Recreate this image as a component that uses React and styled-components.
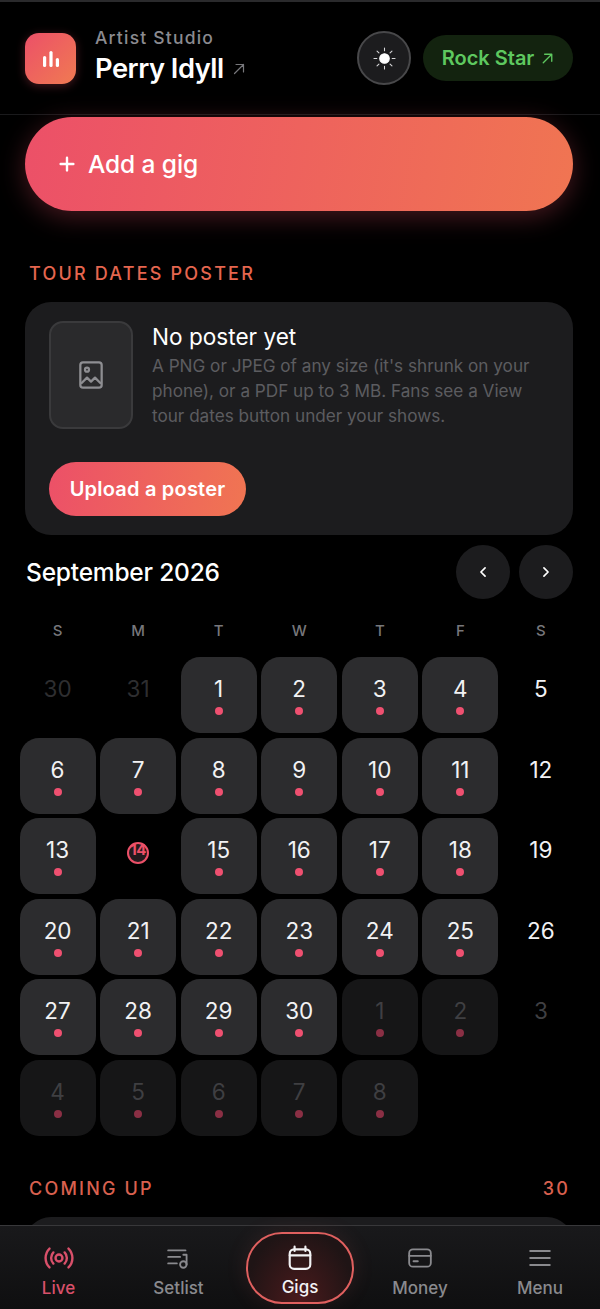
import React from 'react';
import styled, { createGlobalStyle } from 'styled-components';

const Global = createGlobalStyle`
  html, body { margin: 0; padding: 0; background: #000; }
  body { font-family: Inter, "Noto Sans", sans-serif; -webkit-font-smoothing: antialiased; }
  * { box-sizing: border-box; }
`;

const Page = styled.div`
  width: 600px; height: 1309px; overflow: hidden; background: #000; position: relative;
  border-top: 2px solid #2a2a2c;
`;
const Header = styled.header`
  height: 113px; border-bottom: 1px solid #1a1a1c;
  display: flex; align-items: center; padding: 0 27px 0 25px; margin-bottom: 2px;
`;
const Logo = styled.div`
  width: 51px; height: 51px; border-radius: 14px; margin-top: 1px;
  background: linear-gradient(135deg, #ec5068, #f07a52);
  box-shadow: 0 2px 10px rgba(236,80,104,.3);
  display: flex; align-items: center; justify-content: center;
`;
const Titles = styled.div`
  margin-left: 19px; flex: 1; display: flex; flex-direction: column; gap: 3px; margin-top: -3px;
`;
const Eyebrow = styled.div`
  font-size: 17.5px; line-height: 24px; color: #8b8b90; font-weight: 500; letter-spacing: 1.2px; margin-top: -2px;
`;
const NameRow = styled.div`
  display: flex; align-items: center; gap: 6px;
`;
const Name = styled.div`
  font-size: 27.3px; line-height: 32px; color: #fff; font-weight: 600; letter-spacing: -.5px;
`;
const ThemeButton = styled.button`
  width: 54px; height: 54px; border-radius: 50%; background: #1c1c1e; border: 2px solid #48484a;
  display: flex; align-items: center; justify-content: center; padding: 0; margin-right: 12px;
`;
const Plan = styled.div`
  height: 46px; width: 150px; border-radius: 23px; background: #13230f; color: #5ec85f;
  font-size: 20px; font-weight: 600; display: flex; align-items: center; justify-content: center; gap: 5px; padding-left: 2px;
`;
const AddGig = styled.button`
  display: flex; align-items: center; width: 548px; height: 94px; margin: 0 0 0 25px; border: 0;
  border-radius: 47px; background: linear-gradient(100deg, #ec5068, #f07552); color: #fff;
  padding: 0 0 0 33px; gap: 12px; font: 500 24.5px Inter, sans-serif; letter-spacing: -.1px;
  box-shadow: 0 6px 26px rgba(236,80,104,.3);
`;
const SectionLabel = styled.div`
  display: flex; justify-content: space-between; color: ${p => p.$dim ? '#d9604f' : '#e5664f'};
  font-size: 18px; font-weight: 500; letter-spacing: 2.2px; line-height: 24px;
  padding: 0 30px 0 29px;
`;
const PosterLabel = styled(SectionLabel)`margin-top: 51px;`;
const Card = styled.section`
  margin: 16px 27px 0 25px; height: 233px; border-radius: 26px; background: #1c1c1e;
  padding: 19px 24px;
`;
const PosterRow = styled.div`display: flex; gap: 19px;`;
const Thumb = styled.div`
  width: 84px; height: 108px; flex: none; border-radius: 14px; background: #2a2a2c; border: 2px solid #3a3a3c;
  display: flex; align-items: center; justify-content: center;
`;
const PosterText = styled.div`padding-top: 2px;`;
const PosterTitle = styled.div`font-size: 22.6px; line-height: 28px; color: #fff; font-weight: 400;`;
const PosterDesc = styled.div`
  font-size: 17.15px; line-height: 25px; color: #5c5c60; margin-top: 2px; white-space: nowrap;
`;
const Upload = styled.button`
  display: block; margin-top: 33px; width: 197px; height: 54px; border: 0; border-radius: 27px;
  background: linear-gradient(100deg, #ec5068, #f07552); color: #fff; font: 600 20px Inter, sans-serif; letter-spacing: .2px;
`;
const CalHeader = styled.div`
  display: flex; align-items: center; justify-content: space-between; margin: 10px 27px 0 26px; height: 54px;
`;
const Month = styled.div`font-size: 24.5px; font-weight: 500; color: #fff; letter-spacing: -.2px;`;
const Arrows = styled.div`display: flex; gap: 9px;`;
const Arrow = styled.button`
  width: 54px; height: 54px; border-radius: 50%; border: 0; background: #1c1c1e; color: #fff;
  display: flex; align-items: center; justify-content: center; padding: 0;
`;
const Grid = styled.div`
  display: grid; grid-template-columns: repeat(7, 76px); column-gap: 4.55px; row-gap: 4.6px; padding: 0 20px 0 19.6px;
`;
const Weekdays = styled(Grid)`margin-top: 22px; height: 36px; align-items: flex-start;`;
const Weekday = styled.div`
  text-align: center; font-size: 15px; line-height: 20px; color: #77777b; font-weight: 500;
`;
const Cell = styled.div`
  height: 76px; border-radius: 19px; display: flex; flex-direction: column; align-items: center;
  padding-top: 18px; font-size: 22.5px; line-height: 28px; font-weight: 400;
  background: ${p => p.$kind === 'gig' ? '#2c2c2e' : p.$kind === 'fade' ? '#161617' : 'transparent'};
  color: ${p => p.$kind === 'fade' || p.$kind === 'outDim' ? '#3f3f42' : p.$kind === 'out' ? '#2e2e30' : '#f2f2f4'};
`;
const Dot = styled.span`
  width: 8px; height: 8px; border-radius: 50%; margin-top: 4px;
  background: ${p => p.$fade ? '#8a2f44' : '#ef5070'};
`;
const Today = styled.span`
  width: 22px; height: 22px; border-radius: 50%; margin-top: 6px; border: 2.5px solid #ec5068;
  background: #241a1e; color: #ec5068; font-size: 15px; line-height: 12px; font-weight: 700;
  text-align: center; letter-spacing: -.5px; white-space: nowrap;
`;
const ComingLabel = styled(SectionLabel)`margin-top: 41px;`;
const Peek = styled.div`
  margin: 16px 27px 0 25px; height: 100px; border-radius: 26px; background: #1c1c1e;
`;
const Nav = styled.nav`
  position: absolute; left: 0; right: 0; bottom: 0; height: 84px; border-top: 1px solid #38383a;
  background: linear-gradient(180deg, #19191b, #0f0f10);
  display: grid; grid-template-columns: 117px 123px 120px 120px 120px;
`;
const Tab = styled.div`
  display: flex; flex-direction: column; align-items: center; padding-top: 19px; gap: 6px;
  font-size: 17px; line-height: 22px; font-weight: 500;
  color: ${p => p.$live ? '#d9506a' : '#8a8a8e'};
`;
const IconBox = styled.div`
  height: 26px; display: flex; align-items: center; justify-content: center;
`;
const ActiveTab = styled.div`
  display: flex; flex-direction: column; align-items: center; justify-content: flex-start;
  margin-top: 6px; height: 72px; width: 108px; justify-self: center; border-radius: 36px; border: 2px solid #e0605f;
  background: radial-gradient(ellipse at 50% 100%, #4a1a1c, #1f1415 75%);
  box-shadow: 0 0 22px rgba(224,96,95,.12);
  color: #f2f2f4; font-size: 17px; font-weight: 500; line-height: 22px; padding-top: 11px; gap: 5px;
`;

const Sw = ({ size = 24, color = 'currentColor', sw = 2, children, vb = '0 0 24 24' }) => (
  <svg width={size} height={size} viewBox={vb} fill="none" stroke={color} strokeWidth={sw} strokeLinecap="round" strokeLinejoin="round">{children}</svg>
);
const Up = ({ size, color, sw = 1.6 }) => <Sw size={size} color={color} sw={sw}><path d="M6 18 18 6M8 6h10v10" /></Sw>;

const week = [
  [['30','out'],['31','out'],['1','gig'],['2','gig'],['3','gig'],['4','gig'],['5','free']],
  [['6','gig'],['7','gig'],['8','gig'],['9','gig'],['10','gig'],['11','gig'],['12','free']],
  [['13','gig'],['14','today'],['15','gig'],['16','gig'],['17','gig'],['18','gig'],['19','free']],
  [['20','gig'],['21','gig'],['22','gig'],['23','gig'],['24','gig'],['25','gig'],['26','free']],
  [['27','gig'],['28','gig'],['29','gig'],['30','gig'],['1','fade'],['2','fade'],['3','outDim']],
  [['4','fade'],['5','fade'],['6','fade'],['7','fade'],['8','fade']],
].flat();

export default function App() {
  return (
    <Page>
      <Global />
      <Header>
        <Logo>
          <svg width="18" height="18" viewBox="0 0 18 18" fill="#fff">
            <rect x="1" y="6" width="3.2" height="11" rx="1.6" /><rect x="7.4" y="1" width="3.2" height="16" rx="1.6" /><rect x="13.8" y="8" width="3.2" height="9" rx="1.6" />
          </svg>
        </Logo>
        <Titles>
          <Eyebrow>Artist Studio</Eyebrow>
          <NameRow><Name>Perry Idyll</Name><Up size={18} color="#77777b" /></NameRow>
        </Titles>
        <ThemeButton aria-label="Theme">
          <Sw size={23} color="#d8d8da" sw={1.1}>
            <circle cx="12" cy="12" r="5" fill="#fff" stroke="#fff" />
            <path d="M12 1v3M12 20v3M1 12h3M20 12h3M4.2 4.2l2 2M17.8 17.8l2 2M4.2 19.8l2-2M17.8 6.2l2-2" />
          </Sw>
        </ThemeButton>
        <Plan>Rock Star <Up size={17} color="#5ec85f" sw={1.9} /></Plan>
      </Header>
      <AddGig>
        <Sw size={18} color="#fff" sw={3.2}><path d="M12 3.5v17M3.5 12h17" /></Sw>
        Add a gig
      </AddGig>
      <PosterLabel>TOUR DATES POSTER</PosterLabel>
      <Card>
        <PosterRow>
          <Thumb>
            <Sw size={32} color="#8e8e92" sw={1.7}>
              <rect x="4" y="2.5" width="16" height="19" rx="2" />
              <circle cx="9" cy="8" r="1.5" />
              <path d="M5 18l4-4 3 3 3-3 4 4" />
            </Sw>
          </Thumb>
          <PosterText>
            <PosterTitle>No poster yet</PosterTitle>
            <PosterDesc>A PNG or JPEG of any size (it's shrunk on your<br />phone), or a PDF up to 3 MB. Fans see a View<br />tour dates button under your shows.</PosterDesc>
          </PosterText>
        </PosterRow>
        <Upload>Upload a poster</Upload>
      </Card>
      <CalHeader>
        <Month>September 2026</Month>
        <Arrows>
          <Arrow aria-label="Previous"><Sw size={20} sw={2}><path d="M14.5 7l-5 5 5 5" /></Sw></Arrow>
          <Arrow aria-label="Next"><Sw size={20} sw={2}><path d="M9.5 7l5 5-5 5" /></Sw></Arrow>
        </Arrows>
      </CalHeader>
      <Weekdays>
        {['S','M','T','W','T','F','S'].map((d, i) => <Weekday key={i}>{d}</Weekday>)}
      </Weekdays>
      <Grid>
        {week.map(([n, kind], i) => kind === 'today'
          ? <Cell key={i} $kind="out"><Today>{n}</Today></Cell>
          : (
            <Cell key={i} $kind={kind}>
              {n}
              {(kind === 'gig' || kind === 'fade') && <Dot $fade={kind === 'fade'} />}
            </Cell>
          ))}
      </Grid>
      <ComingLabel $dim><span>COMING UP</span><span>30</span></ComingLabel>
      <Peek />
      <Nav>
        <Tab $live>
          <IconBox>
            <Sw size={32} sw={1.8}>
              <circle cx="12" cy="12" r="2.6" />
              <path d="M7.8 16.2a6 6 0 0 1 0-8.4M16.2 7.8a6 6 0 0 1 0 8.4M4.9 19.1a10 10 0 0 1 0-14.2M19.1 4.9a10 10 0 0 1 0 14.2" />
            </Sw>
          </IconBox>
          Live
        </Tab>
        <Tab>
          <IconBox>
            <Sw size={26} sw={1.7}>
              <path d="M2 5h16M2 11h11M2 17h8" />
              <circle cx="16" cy="18" r="3" /><path d="M19 18V9h-3" />
            </Sw>
          </IconBox>
          Setlist
        </Tab>
        <ActiveTab>
          <Sw size={26} sw={2}>
            <rect x="2.5" y="4" width="19" height="18" rx="4" /><path d="M7 1.5v4M17 1.5v4M2.5 9.5h19" />
          </Sw>
          Gigs
        </ActiveTab>
        <Tab>
          <IconBox>
            <Sw size={26} sw={1.7}>
              <rect x="2" y="4" width="20" height="16" rx="3.5" /><path d="M2 10h20M6 15h4" />
            </Sw>
          </IconBox>
          Money
        </Tab>
        <Tab>
          <IconBox>
            <Sw size={26} sw={1.9}><path d="M3 5.5h18M3 12h18M3 18.5h18" /></Sw>
          </IconBox>
          Menu
        </Tab>
      </Nav>
    </Page>
  );
}
